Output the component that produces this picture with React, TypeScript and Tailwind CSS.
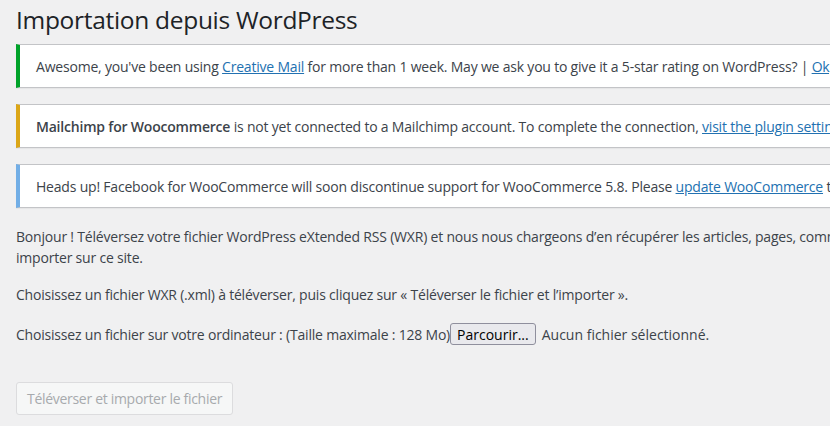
import React from "react";

const font = { fontFamily: '"Open Sans", "Noto Sans", Arial, sans-serif' };

function Notice({ color, children }: { color: string; children: React.ReactNode }) {
  return (
    <div
      className={`h-[44px] w-[1000px] bg-white border border-[#c3c4c7] border-l-4 ${color} flex items-center pl-[16px] whitespace-nowrap shadow-[0_1px_1px_rgba(0,0,0,0.04)]`}
    >
      {children}
    </div>
  );
}

export default function App() {
  return (
    <div
      className="w-[830px] h-[426px] overflow-hidden bg-[#f0f0f1] text-[#3c434a] text-[14px] tracking-[-0.2px]"
      style={font}
    >
      <div className="pl-[16px] w-[1200px]">
        <h1 className="text-[24.5px] font-normal text-[#1d2327] leading-[29px] pt-[5px] tracking-[-0.3px]">
          Importation depuis WordPress
        </h1>
        <div className="mt-[10px] flex flex-col gap-[16px]">
          <Notice color="border-l-[#00a32a]">
            <span>
              Awesome, you've been using{" "}
              <a className="text-[#2271b1] underline">Creative Mail</a> for more than 1 week. May we ask you to give it a
              5-star rating on WordPress? | <a className="text-[#2271b1] underline">Ok, you deserved it</a>
            </span>
          </Notice>
          <Notice color="border-l-[#dba617]">
            <span>
              <b className="font-semibold">Mailchimp for Woocommerce</b> is not yet connected to a Mailchimp account. To
              complete the connection, <a className="text-[#2271b1] underline">visit the plugin settings page</a>.
            </span>
          </Notice>
          <Notice color="border-l-[#72aee6]">
            <span>
              Heads up! Facebook for WooCommerce will soon discontinue support for WooCommerce 5.8. Please{" "}
              <a className="text-[#2271b1] underline">update WooCommerce</a> to continue using this plugin.
            </span>
          </Notice>
        </div>
        <div className="mt-[18px] leading-[21px] whitespace-nowrap">
          <p>
            Bonjour ! Téléversez votre fichier WordPress eXtended RSS (WXR) et nous nous chargeons d’en récupérer les
            articles, pages, commentaires, champs personnalisés, catégories et étiquettes pour les
            <br />
            importer sur ce site.
          </p>
          <p className="mt-[16px]">
            Choisissez un fichier WXR (.xml) à téléverser, puis cliquez sur « Téléverser le fichier et l’importer ».
          </p>
          <div className="mt-[17px] flex items-center h-[24px]">
            <span>Choisissez un fichier sur votre ordinateur : (Taille maximale : 128 Mo)</span>
            <span className="ml-[0px] inline-flex items-center h-[22px] px-[6px] border border-[#8f8f9d] rounded-[3px] bg-[#e9e9ed] text-black text-[14px] tracking-normal">
              Parcourir...
            </span>
            <span className="ml-[6px] tracking-normal">Aucun fichier sélectionné.</span>
          </div>
        </div>
        <div className="mt-[36px]">
          <span className="inline-flex items-center h-[33px] px-[10px] border border-[#dcdcde] rounded-[3px] bg-[#f6f7f7] text-[#a7aaad] text-[14px] tracking-[-0.3px]">
            Téléverser et importer le fichier
          </span>
        </div>
      </div>
    </div>
  );
}
